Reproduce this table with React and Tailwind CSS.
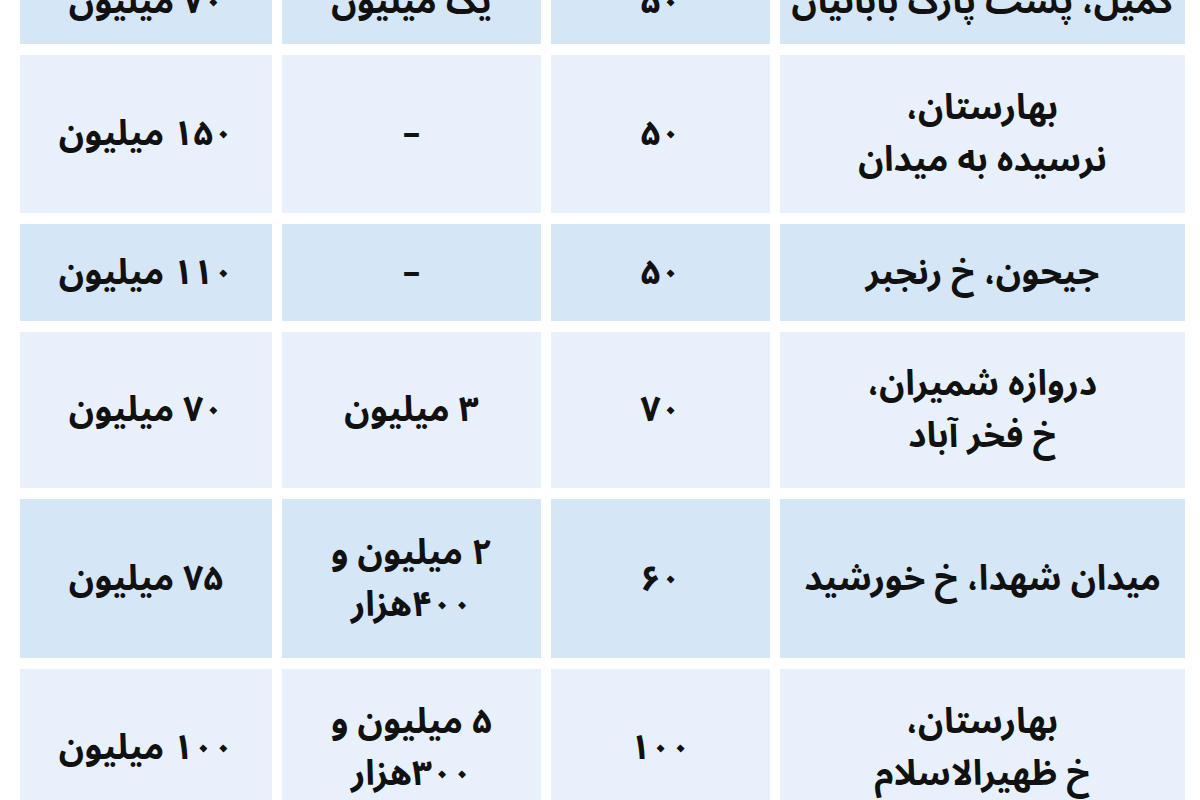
import React from 'react';

const rows = [
  { h: 'h-[84px]', tone: 'dark', cells: ['کمیل، پشت پارک بابائیان', '۵۰', 'یک میلیون', '۷۰ میلیون'] },
  { h: 'h-[158px]', tone: 'light', cells: [['بهارستان،', 'نرسیده به میدان'], '۵۰', '–', '۱۵۰ میلیون'] },
  { h: 'h-[97px]', tone: 'dark', cells: ['جیحون، خ رنجبر', '۵۰', '–', '۱۱۰ میلیون'] },
  { h: 'h-[156px]', tone: 'light', cells: [['دروازه شمیران،', 'خ فخر آباد'], '۷۰', '۳ میلیون', '۷۰ میلیون'] },
  { h: 'h-[159px]', tone: 'dark', cells: ['میدان شهدا، خ خورشید', '۶۰', ['۲ میلیون و', '۴۰۰هزار'], '۷۵ میلیون'] },
  { h: 'h-[157px]', tone: 'light', cells: [['بهارستان،', 'خ ظهیرالاسلام'], '۱۰۰', ['۵ میلیون و', '۳۰۰هزار'], '۱۰۰ میلیون'] },
];

function Cell({ value, tone }) {
  const bg = tone === 'dark' ? 'bg-[#d5e6f6]' : 'bg-[#e8f1fb]';
  const lines = Array.isArray(value) ? value : [value];
  return (
    <div className={`${bg} flex flex-col items-center justify-center text-center`}>
      {lines.map((line, i) => (
        <span key={i} className="block leading-[52px]">{line}</span>
      ))}
    </div>
  );
}

export default function App() {
  return (
    <div
      dir="rtl"
      className="w-[1200px] h-[800px] overflow-hidden bg-white pr-[15px] pl-[20px] text-[#111111] text-[35px] font-bold"
      style={{ fontFamily: '"Noto Sans Arabic", "Vazirmatn", "DejaVu Sans", sans-serif' }}
    >
      <div className="-mt-[40px] flex flex-col gap-[11px]">
        {rows.map((row, r) => (
          <div key={r} className={`grid grid-cols-[405px_219px_259px_252px] gap-x-[10px] ${row.h}`}>
            {row.cells.map((c, i) => (
              <Cell key={i} value={c} tone={row.tone} />
            ))}
          </div>
        ))}
      </div>
    </div>
  );
}
